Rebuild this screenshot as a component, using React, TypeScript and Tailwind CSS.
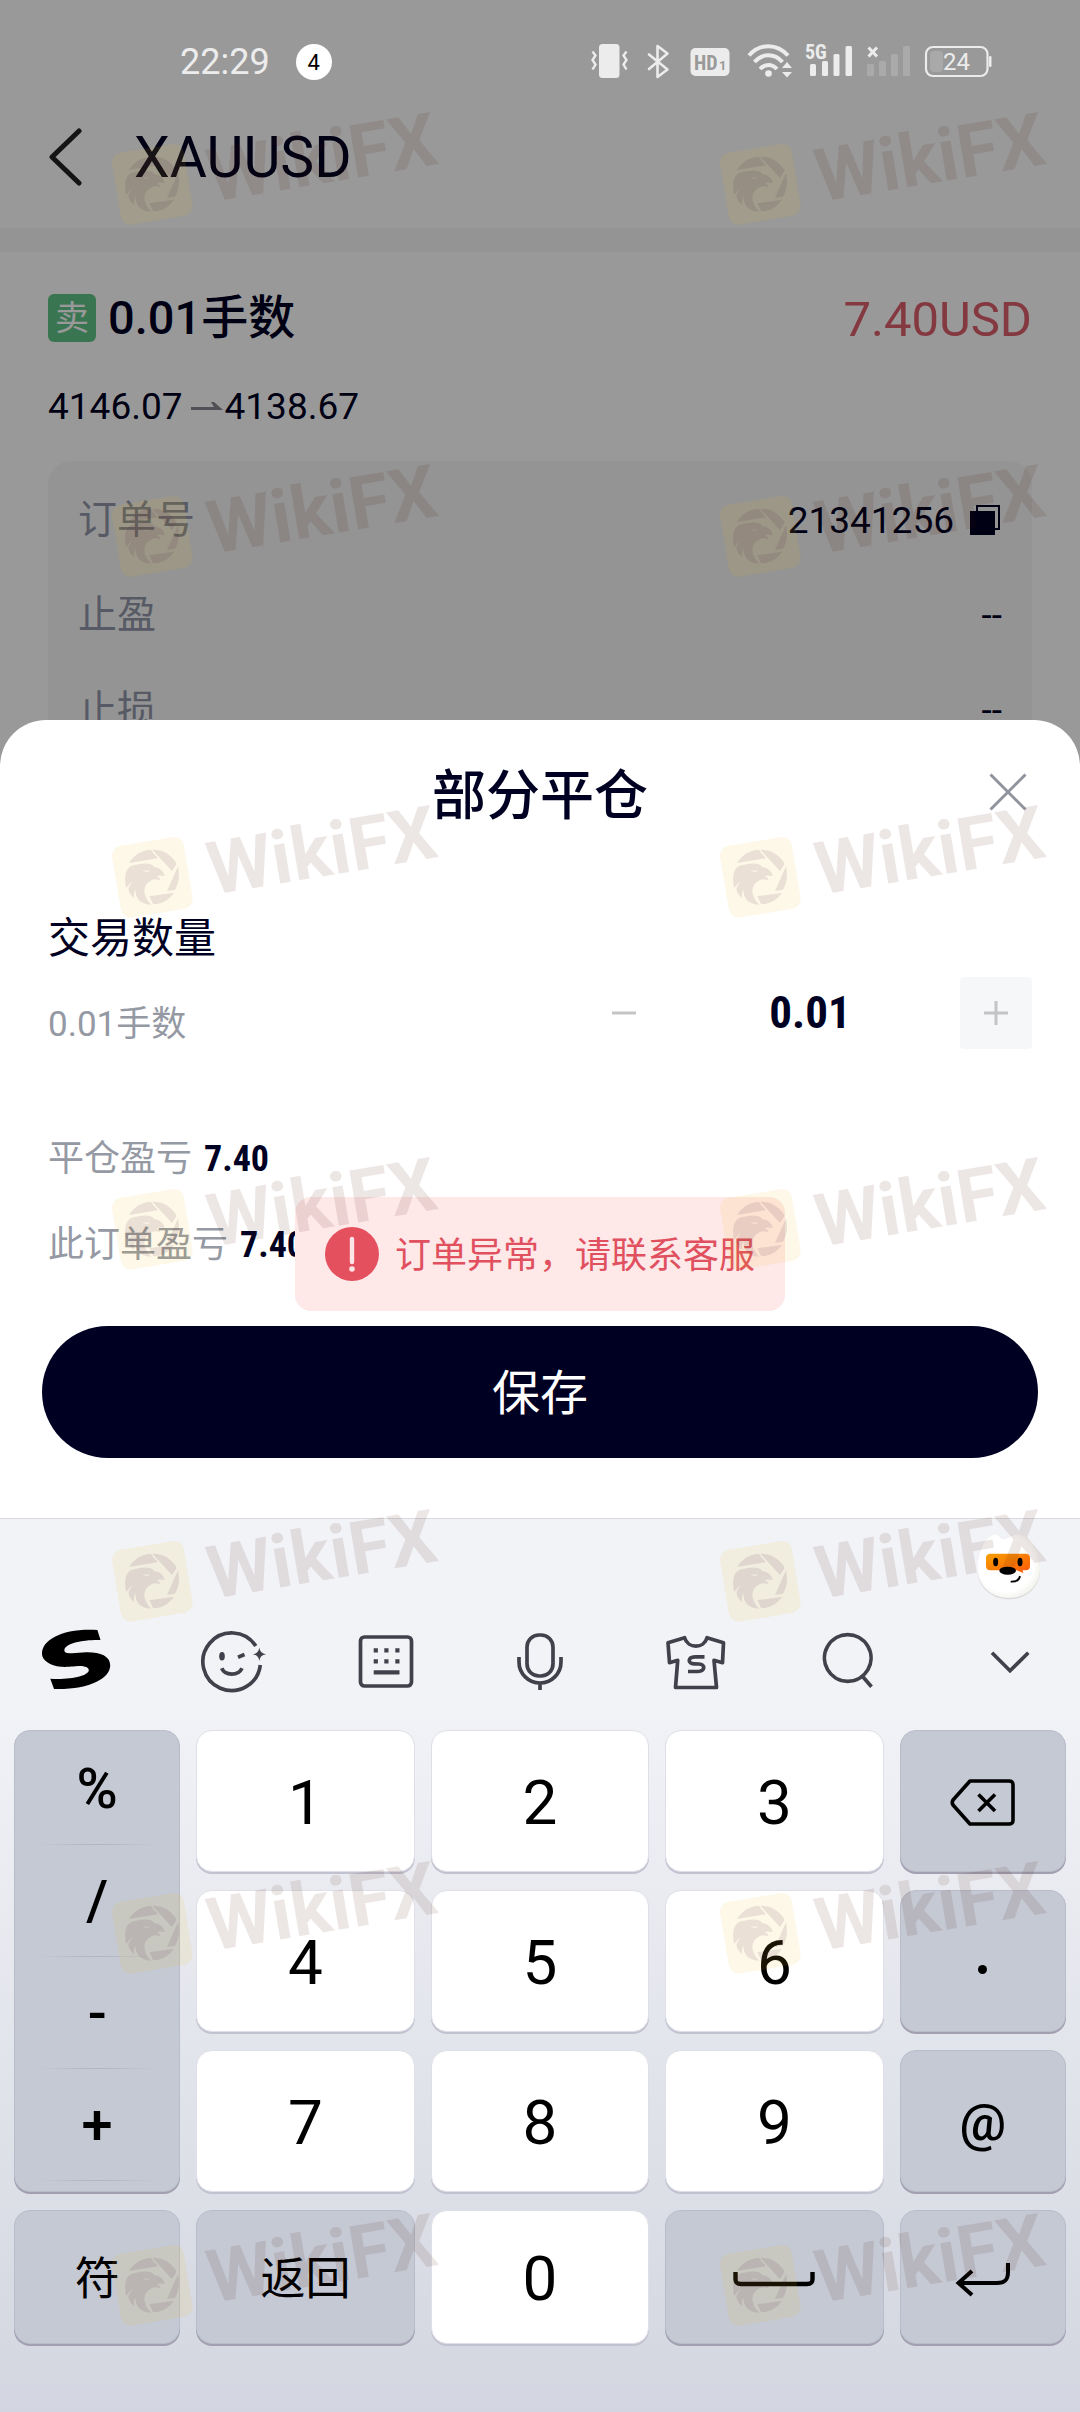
import React, { useState } from 'react';
import clsx from 'clsx';

const orderRows = [
    { label: '订单号', value: '21341256', copy: true },
    { label: '止盈', value: '--' },
    { label: '止损', value: '--' },
];

const profitRows = [
    { label: '平仓盈亏', value: '7.40' },
    { label: '此订单盈亏', value: '7.40' },
];

function StatusIcons() {
    return (
        <div className="flex items-center text-[#ececec]">
            {/* Vibrate */}
            <svg width="50" height="44" viewBox="590 40 50 44" fill="none" stroke="currentColor" strokeWidth="2.4">
                <rect x="599" y="44" width="20.500" height="34" rx="3.500" fill="currentColor" stroke="none" />
                <path d="M592.500 51.500l3 4-3 4.500 3 4.500-3 5M626.500 51.500l-3 4 3 4.500-3 4.500 3 5" />
            </svg>
            {/* Bluetooth */}
            <svg width="40" height="44" viewBox="640 40 40 44" fill="none" stroke="currentColor" strokeWidth="2.600" strokeLinejoin="round" strokeLinecap="round">
                <path d="M649 54.500l18.500 15-10 7.500V46l10 7.500-18.500 15.500" />
            </svg>
            {/* HD */}
            <svg width="60" height="44" viewBox="680 40 60 44">
                <rect x="690.500" y="48" width="39" height="28" rx="5" fill="currentColor" />
                <text x="694" y="70" fill="#999999" className="text-[20px] font-bold font-['Roboto_Condensed',sans-serif]">HD</text>
                <text x="719" y="70" fill="#999999" className="text-[13px] font-bold font-['Roboto',sans-serif]">1</text>
            </svg>
            {/* Wifi */}
            <svg width="60" height="44" viewBox="740 40 60 44" fill="none" stroke="currentColor" strokeWidth="4">
                <path d="M749 55.500c11-12.500 28-12.500 39 0M754.500 62c8-9 20-9 28 0M760 69c5-5.500 12-5.500 17 0" />
                <circle cx="768.500" cy="73.500" r="3.300" fill="currentColor" stroke="none" />
                <path d="M782 68l5-6 5 6zM782 72h10l-5 5.500z" fill="currentColor" stroke="none" />
            </svg>
            {/* Mobile signal */}
            <svg width="60" height="44" viewBox="800 40 60 44" fill="currentColor">
                <text x="805" y="59" className="text-[20px] font-bold font-['Roboto_Condensed',sans-serif]">5G</text>
                <rect x="810" y="64" width="6" height="12" rx="1.500" />
                <rect x="822" y="61" width="6" height="15" rx="1.500" />
                <rect x="833.500" y="54" width="6" height="22" rx="1.500" />
                <rect x="845.500" y="46" width="6.500" height="30" rx="1.500" />
            </svg>
            {/* Second SIM, no service */}
            <svg width="58" height="44" viewBox="860 40 58 44" fill="currentColor">
                <path d="M868.500 47.500l8.500 9M877 47.500l-8.500 9" stroke="currentColor" strokeWidth="3" />
                <g fill="#aaaaaa">
                    <rect x="867" y="64" width="7" height="12" rx="1.500" />
                    <rect x="879" y="61" width="7" height="15" rx="1.500" />
                    <rect x="891" y="54" width="7" height="22" rx="1.500" />
                    <rect x="903" y="46" width="7" height="30" rx="1.500" />
                </g>
            </svg>
            {/* Battery */}
            <svg width="82" height="44" viewBox="918 40 82 44">
                <rect x="926" y="47" width="61.500" height="29" rx="7" fill="none" stroke="currentColor" strokeWidth="2.200" />
                <rect x="930" y="51" width="13" height="21" rx="4" fill="#a9a9a9" />
                <rect x="989" y="56" width="2.500" height="11" rx="1.200" fill="currentColor" />
                <text x="943" y="70" fill="currentColor" className="text-[24px] font-['Roboto',sans-serif]">24</text>
            </svg>
        </div>
    );
}

function Watermark() {
    return (
        <svg width="608" height="352" viewBox="0 0 608 352" className="shrink-0">
            <g transform="translate(100 133) scale(0.3333)">
                <rect x="48" y="45" width="218" height="218" rx="30" transform="rotate(-9.500 157 154)" fill="#f0be14" fillOpacity="0.1" />
                <g fill="#461040" fillOpacity="0.1" fillRule="evenodd">
                    <path d="M87 111C101 88 123 73 152 71L173 97z" />
                    <path d="M157 71C180 71 192 76 206 86C217 94 224 103 230 113L216 135z" />
                    <path d="M234 121C240 147 237 171 225 191L201 195z" />
                    <path d="M148 211L222 200C207 222 186 234 160 235z" />
                    <path d="M76 170C73 140 82 120 104 117C118 116 128 112 142 113C155 114 161 119 163 124C181 126 191 135 194 151C186 147 176 148 169 150C176 153 182 158 180 163C168 157 156 161 150 166C137 174 131 186 134 203C138 219 147 228 154 236C137 236 121 229 113 217C107 207 107 198 106 189C102 199 101 207 103 216C93 209 87 200 85 188C88 178 94 170 100 164C91 170 85 177 80 185C77 180 76 175 76 170zM129 132C135 139 145 140 150 133C143 135 136 134 129 132z" />
                </g>
            </g>
            <text x="0" y="0" transform="translate(212 202) rotate(-9.500)" fill="#460f00" fillOpacity="0.1" className="text-[74px] font-bold font-['Roboto',sans-serif]">WikiFX</text>
        </svg>
    );
}

function Mascot() {
    return (
        <svg width="66" height="70" viewBox="45 30 198 210">
            <defs>
                <linearGradient id="goggles" x1="0" y1="0" x2="1" y2="1">
                    <stop offset="0" stopColor="#f5a000" />
                    <stop offset="1" stopColor="#ff5a0a" />
                </linearGradient>
                <radialGradient id="fur" cx="0.45" cy="0.45" r="0.6">
                    <stop offset="0.75" stopColor="#ffffff" />
                    <stop offset="1" stopColor="#f1f0ea" />
                </radialGradient>
            </defs>
            <path d="M53 150C53 105 75 48 103 42C115 42 122 55 130 58C142 58 155 42 180 42C215 52 240 105 240 150C240 202 199 238 147 238C95 238 53 202 53 150z" fill="#d9d9d9" />
            <path d="M53 145C53 100 75 48 103 42C115 42 122 55 130 58C142 58 155 42 180 42C215 50 240 102 240 145C240 199 199 234 147 234C95 234 53 199 53 145z" fill="url(#fur)" />
            <path d="M92 101H197C206 101 210 106 210 114V138C210 147 206 151 197 151H188L190 159L170 151H92C82 151 78 146 78 138V114C78 106 82 101 92 101z" fill="url(#goggles)" />
            <ellipse cx="107" cy="126" rx="7.500" ry="13" />
            <ellipse cx="180" cy="126" rx="7.500" ry="13" />
            <ellipse cx="143" cy="152" rx="25" ry="12" />
            <path d="M152 185C168 186 178 180 180 168" fill="none" stroke="#000" strokeWidth="5.500" />
        </svg>
    );
}

const tools = [
    {
        label: '搜狗',
        icon: <path d="M71.400 8L74.500 18C58 17.500 39 21 38.400 28C38 31 42 31.500 46 31.200L60 30.300C74 30 84 34 84.200 43C84.500 57 62 68 28 67L24.300 56.700C44 58 62.800 54 62.800 48C62.800 45.500 59 43.800 52 44C42 45 38 45 35 44.800C24 44 16 38 16 32C16 17 38 6 71.400 8z" fill="#000" stroke="none" />,
    },
    {
        label: '表情',
        icon: (
            <>
                <path d="M74.800 24A28.800 28.800 0 1 0 79.300 43" />
                <path d="M78.300 25.500Q79 31.500 85 32.300Q79 33 78.300 39Q77.600 33 71.600 32.300Q77.600 31.500 78.300 25.500z" fill="currentColor" stroke="none" />
                <ellipse cx="41" cy="34.300" rx="2.800" ry="4.300" fill="currentColor" stroke="none" />
                <path d="M57 35.200L63.500 32.500" />
                <path d="M40.700 46.300C44 54 57.500 54 61 46.300" />
            </>
        ),
    },
    {
        label: '键盘',
        icon: (
            <>
                <rect x="25.500" y="15" width="51" height="49" rx="4" />
                <path d="M38.700 28.300h4.200M49.300 28.300h4.200M60.300 28.300h4.200M38.700 39.300h4.200M49.300 39.300h4.200M60.300 39.300h4.200M38.700 50.300h25.800" strokeWidth="4.200" />
            </>
        ),
    },
    {
        label: '语音',
        icon: (
            <>
                <rect x="37" y="13" width="26" height="41" rx="12" />
                <path d="M29 35V40A21 21 0 0 0 71 40V35M50 61V68" />
            </>
        ),
    },
    {
        label: '皮肤',
        icon: (
            <>
                <path d="M39.600 15.700L23 20.700L24.500 40.700L32.700 38.300L30.500 65.500H71.500L69 38.300L77.500 40.700L78.500 20.700L62 15.700C59 27 43 27 39.600 15.700z" strokeLinejoin="round" />
                <path d="M59.500 34.800H50C43 35 42 41.500 49 41.800L54 42C61 42.500 60 49.300 53 49.500H43" />
            </>
        ),
    },
    {
        label: '搜索',
        icon: <path d="M48.700 12.700a23.300 23.300 0 1 0 0.100 0zM63.200 54L72.500 64.700" />,
    },
    {
        label: '收起',
        icon: <path d="M38 30.700L56 48.700L74.300 30.700" />,
    },
];

function Key({ dark = false, label, className = 'text-[62px]', children }: { dark?: boolean; label?: string; className?: string; children: React.ReactNode }) {
    return (
        <button
            aria-label={label}
            className={clsx(
                'flex items-center justify-center rounded-2xl border pt-1 leading-none text-black',
                dark ? 'bg-[#c5c9d4] border-[#b9bcca] shadow-[0_2px_0_#a19fb0]' : 'bg-white border-[#dfe0e7] shadow-[0_2px_0_#c1c1d0]',
                className
            )}
        >
            {children}
        </button>
    );
}

function Keyboard() {
    return (
        <section className="border-t border-[#d9dbe0] bg-gradient-to-b from-[#f2f3f7] from-20% to-[#d3d6e0]">
            <div className="flex h-24 items-center justify-end pb-1 pr-[39px]">
                <Mascot />
            </div>
            <div className="mt-[7px] flex justify-between px-[26px] text-[#41414b]">
                {tools.map((tool) => (
                    <button key={tool.label} aria-label={tool.label}>
                        <svg width="100" height="80" viewBox="0 0 100 80" fill="none" stroke="currentColor" strokeWidth="3.700">
                            {tool.icon}
                        </svg>
                    </button>
                ))}
            </div>
            <div className="mt-7 grid grid-cols-[166fr_218fr_218fr_218fr_166fr] grid-rows-[142px_142px_142px_134px] gap-x-4 gap-y-[18px] px-[14px] pb-[68px]">
                <div className="row-span-3 flex flex-col rounded-2xl border border-[#b9bcca] bg-[#c5c9d4] pb-2.5 pt-0.5 shadow-[0_2px_0_#a19fb0]">
                    {['%', '/', '-', '+'].map((symbol) => (
                        <button key={symbol} className="flex flex-1 flex-col items-center text-[56px] font-medium leading-none text-black">
                            <span className="flex flex-1 items-center">{symbol}</span>
                            <span className="h-px w-[124px] bg-gradient-to-r from-transparent via-[#b0b3c0] to-transparent" />
                        </button>
                    ))}
                </div>
                <Key>1</Key>
                <Key>2</Key>
                <Key>3</Key>
                <Key dark label="删除">
                    <svg width="68" height="50" viewBox="0 0 68 50" fill="none" stroke="currentColor" strokeWidth="3.600" strokeLinejoin="round">
                        <path d="M21 3H60C63 3 64 4 64 7V42C64 45 63 46 60 46H21L4 27Q2.500 24.500 4 22z" />
                        <path d="M29.500 16.500L46 33M46 16.500L29.500 33" />
                    </svg>
                </Key>
                <Key>4</Key>
                <Key>5</Key>
                <Key>6</Key>
                <Key dark label=".">
                    <span className="mt-3 size-[9px] rounded-full bg-black" />
                </Key>
                <Key>7</Key>
                <Key>8</Key>
                <Key>9</Key>
                <Key dark className="text-[52px] font-medium">@</Key>
                <Key dark className="text-[45px]">符</Key>
                <Key dark className="text-[45px]">返回</Key>
                <Key>0</Key>
                <Key dark label="空格">
                    <svg width="82" height="20" viewBox="0 0 82 20" fill="none" stroke="currentColor" strokeWidth="4.400">
                        <path d="M2.500 3V10C2.500 14 4 15 8 15H74C78 15 79.500 14 79.500 10V3" />
                    </svg>
                </Key>
                <Key dark label="换行">
                    <svg width="56" height="38" viewBox="0 0 56 38" fill="none" stroke="currentColor" strokeWidth="4">
                        <path d="M53 3V12C53 20 50 23 42 23H4M17 11L3.500 23L17 35" />
                    </svg>
                </Key>
            </div>
        </section>
    );
}

export default function App() {
    const [volume, setVolume] = useState('0.01');

    return (
        <div lang="zh-CN" className="relative min-h-screen overflow-hidden bg-white text-[#000023] font-['Roboto','Noto_Sans_CJK_SC',sans-serif]">
            {/* Position page behind the sheet */}
            <section className="relative bg-white">
                <div className="relative z-10 flex h-[124px] items-center justify-between pl-[180px] pr-20">
                    <div className="flex items-center gap-[26px] text-[36px] text-[#ececec]">
                        <span>22:29</span>
                        <span className="flex size-9 items-center justify-center rounded-full bg-white text-[22px] text-black">4</span>
                    </div>
                    <StatusIcons />
                </div>
                <header className="flex items-center gap-[50px] pb-9 pl-[48px]">
                    <button aria-label="返回">
                        <svg width="36" height="60" viewBox="0 0 36 60" fill="none" stroke="#222222" strokeWidth="5" strokeLinecap="round" strokeLinejoin="round">
                            <path d="M31 3L4 29L31 55" />
                        </svg>
                    </button>
                    <h1 className="text-[57px]/[68px]">XAUUSD</h1>
                </header>
                <div className="h-6 bg-[#f7f7f7]" />
                <div className="px-12 pt-[34px]">
                    <div className="flex items-center justify-between text-[47px]/[60px]">
                        <div className="flex items-center gap-3 font-medium">
                            <span className="flex size-12 items-center justify-center rounded-md bg-[#62c389] text-[34px] font-normal text-white">卖</span>
                            <span>0.01手数</span>
                        </div>
                        <span className="pt-1 text-[49px] text-[#dc5f6b]">7.40USD</span>
                    </div>
                    <div className="mt-[37px] flex items-center text-[37px]/[40px]">
                        <span>4146.07</span>
                        <svg width="42" height="40" viewBox="0 0 42 40" fill="#85858f">
                            <path d="M8 20H31L28 15L31 15L40 23H8z" />
                        </svg>
                        <span>4138.67</span>
                    </div>
                    <div className="mt-[34px] rounded-t-3xl bg-[#f7f7f7] px-[30px] pb-2 pt-3">
                        {orderRows.map((row) => (
                            <div key={row.label} className="flex h-[95px] items-center justify-between">
                                <span className="text-[39px] text-[#9197a8]">{row.label}</span>
                                <span className="flex items-center gap-4 text-[37px]">
                                    {row.value}
                                    {row.copy && (
                                        <button aria-label="复制">
                                            <svg width="32" height="32" viewBox="0 0 32 32">
                                                <path d="M0 6H25V30H0z" fill="#000023" />
                                                <path d="M7 6V1H29V24H25" fill="none" stroke="#000023" strokeWidth="2" />
                                            </svg>
                                        </button>
                                    )}
                                </span>
                            </div>
                        ))}
                    </div>
                </div>
                <div className="absolute inset-0 bg-black/40" />
            </section>

            {/* Partial close sheet */}
            <section className="relative -mt-[46px] rounded-t-[46px] bg-white">
                <div className="grid h-[150px] grid-cols-[1fr_auto_1fr] items-center">
                    <h2 className="col-start-2 pt-0.5 text-[54px] font-medium">部分平仓</h2>
                    <button aria-label="关闭" className="justify-self-end px-[53px] pb-1.5">
                        <svg width="38" height="38" viewBox="0 0 38 38" fill="none" stroke="#90949f" strokeWidth="3">
                            <path d="M1.500 1.500L36.500 36.500M36.500 1.500L1.500 36.500" />
                        </svg>
                    </button>
                </div>
                <div className="mt-[37px] flex items-end justify-between px-12">
                    <div className="flex flex-col gap-8 pt-0.5">
                        <label htmlFor="volume" className="text-[42px]/[60px]">交易数量</label>
                        <span className="text-[35px]/[48px] text-[#9499a3]">0.01手数</span>
                    </div>
                    <div className="flex h-[72px]">
                        <button aria-label="减少" className="flex w-[72px] items-center justify-center">
                            <svg width="24" height="24" stroke="#c4c4c6" strokeWidth="3"><path d="M0 12H24" /></svg>
                        </button>
                        <input
                            id="volume"
                            value={volume}
                            onChange={(e) => setVolume(e.target.value)}
                            className="w-[300px] bg-transparent text-center text-[45px] font-bold outline-none font-['Roboto_Condensed','Liberation_Sans_Narrow',sans-serif]"
                        />
                        <button aria-label="增加" className="flex w-[72px] items-center justify-center rounded bg-[#f5f7f9]">
                            <svg width="24" height="24" stroke="#c4c4c6" strokeWidth="3"><path d="M0 12H24M12 0V24" /></svg>
                        </button>
                    </div>
                </div>
                <div className="mt-[86px] flex flex-col gap-[38px] px-12">
                    {profitRows.map((row) => (
                        <div key={row.label} className="flex items-center gap-3 text-[36px]/[48px]">
                            <span className="text-[#9499a3]">{row.label}</span>
                            <span className="text-[36px] font-bold font-['Roboto_Condensed','Liberation_Sans_Narrow',sans-serif]">{row.value}</span>
                        </div>
                    ))}
                </div>
                <div className="px-[42px] pb-[60px] pt-[57px]">
                    <button className="h-[132px] w-full rounded-full bg-[#000023] pt-1 text-[48px] text-white">保存</button>
                </div>

                {/* Error toast */}
                <div role="alert" className="absolute left-1/2 top-[477px] flex h-[114px] -translate-x-1/2 items-center gap-4 whitespace-nowrap rounded-2xl bg-[#fee8e8] px-[30px] text-[36px] text-[#e0505f]">
                    <svg width="54" height="54" viewBox="0 0 54 54">
                        <circle cx="27" cy="27" r="27" fill="#e5505f" />
                        <path d="M27 12V35" stroke="#fde4e6" strokeWidth="4.400" strokeLinecap="round" />
                        <circle cx="27" cy="42" r="2.800" fill="#fde4e6" />
                    </svg>
                    <span className="pt-1">订单异常，请联系客服</span>
                </div>
            </section>

            <Keyboard />

            {/* Tiled watermark */}
            <div aria-hidden="true" className="pointer-events-none absolute inset-0 z-20 overflow-hidden">
                <div className="flex h-[352px]"><Watermark /><Watermark /></div>
                <div className="flex h-[341px]"><Watermark /><Watermark /></div>
                {[1, 2, 3, 4, 5].map((n) => (
                    <div key={n} className="flex h-[352px]"><Watermark /><Watermark /></div>
                ))}
            </div>
        </div>
    );
}
